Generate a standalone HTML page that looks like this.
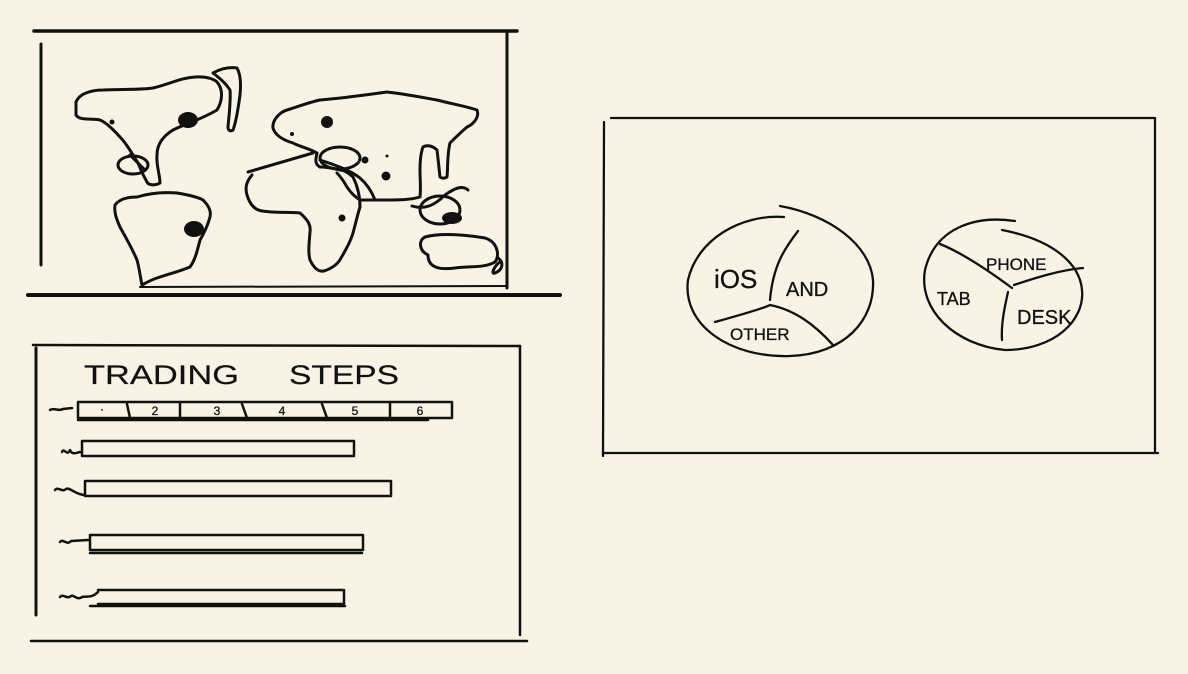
<!DOCTYPE html>
<html><head><meta charset="utf-8"><style>
html,body{margin:0;padding:0;background:#f8f3e5;}
svg{display:block}
text{font-family:"Liberation Sans",sans-serif;fill:#111;stroke:#111;stroke-width:0.3}
</style></head><body>
<svg width="1188" height="674" viewBox="0 0 1188 674" xmlns="http://www.w3.org/2000/svg">
<g fill="none" stroke="#111" stroke-width="3" stroke-linecap="round" stroke-linejoin="round">
<path d="M34 31 L517 31" stroke-width="3.5"/>
<path d="M41 44 L41 265"/>
<path d="M507 32 L507 288"/>
<path d="M140 287 L507 286" stroke-width="2"/>
<path d="M28 295 L560 295" stroke-width="4"/>
<path d="M76 102 C80 92 95 90 103 90 C120 89 140 90 153 88 C170 84 180 78 195 77 C208 76 215 80 217 82 C224 90 222 102 217 110 C200 120 185 124 173 130 C160 138 157 147 157 155 C156 165 160 175 160 183 C155 186 148 185 147 182 C143 175 140 168 138 163 C130 150 125 142 120 137 C112 128 105 122 100 120 C90 118 80 121 76 115 Z"/>
<path d="M213 73 C222 68 230 67 237 68 C241 75 241 85 240 95 C238 110 236 122 233 130 C230 132 228 130 228 127 C229 115 231 100 230 90 C225 82 218 77 213 73"/>
<ellipse cx="133" cy="165" rx="15" ry="9"/>
<path d="M130 155 L145 170"/>
<path d="M115 205 C120 198 130 197 137 197 C150 193 165 192 177 193 C190 195 200 198 203 200 C210 207 211 212 210 217 C207 228 203 235 200 240 C197 252 195 260 190 267 C178 272 168 274 160 277 C150 280 146 283 142 285 C140 275 139 267 137 260 C132 248 126 238 120 227 C116 218 114 212 115 205 Z"/>
<path d="M248 172 L313 153"/>
<path d="M252 175 C246 182 245 188 247 195 C250 205 255 210 262 211 C275 213 290 212 300 213 C308 220 311 225 310 232 C309 245 308 252 310 260 C314 268 318 272 324 271 C333 268 338 264 341 258 C347 248 351 240 353 233 C356 222 358 213 360 207 C360 195 357 185 353 177 C348 172 343 170 340 170 C332 168 325 167 320 167"/>
<path d="M320 167 C314 164 316 158 317 153 C308 148 298 146 293 143 C283 140 275 135 273 128 C272 120 280 112 287 110 C300 106 310 102 320 100 C345 98 365 95 387 92 C405 94 420 97 437 100 C452 104 465 106 477 110 C480 118 472 125 467 127 C460 133 455 138 450 143 C447 155 448 168 447 177 C444 179 441 178 440 177 C439 168 438 158 437 150 C432 145 426 145 423 147 C420 155 420 165 420 170 C420 180 421 188 420 197 C410 200 398 200 387 200 C375 200 365 200 360 200 C352 195 349 190 347 187 C343 180 340 176 337 173"/>
<ellipse cx="340" cy="158" rx="20" ry="11"/>
<path d="M320 160 C335 165 350 170 360 178 C368 185 372 192 375 200"/>
<ellipse cx="440" cy="210" rx="20" ry="14"/>
<path d="M412 206 C425 210 435 205 445 195 C455 188 462 185 468 190"/>
<path d="M428 255 C418 250 419 240 425 237 C440 233 460 234 485 238 C498 242 500 256 495 262 C485 268 470 266 455 268 C440 270 428 268 428 255 Z"/>
<path d="M498 258 C504 262 503 270 495 273 C490 275 495 265 500 262"/>
</g>
<g fill="#111" stroke="none">
<ellipse cx="188" cy="120" rx="10" ry="8"/>
<circle cx="112" cy="122" r="2.5"/>
<ellipse cx="194" cy="229" rx="10" ry="8"/>
<circle cx="327" cy="122" r="6"/>
<circle cx="292" cy="134" r="2"/>
<circle cx="387" cy="156" r="1.5"/>
<circle cx="386" cy="176" r="4.5"/>
<circle cx="342" cy="218" r="3.5"/>
<circle cx="365" cy="160" r="3.5"/>
<ellipse cx="452" cy="218" rx="10" ry="6"/>
</g>
<g fill="none" stroke="#111" stroke-width="2.5" stroke-linecap="round" stroke-linejoin="round">
<path d="M33 345 L520 346"/>
<path d="M36 348 L36 615" stroke-width="3"/>
<path d="M520 346 L520 635"/>
<path d="M31 641 L527 641"/>
<path d="M78 402 L452 402 L452 418 L78 418 Z"/>
<path d="M78 420 L428 420"/>
<path d="M127 404 L130 418 M180 404 L180 418 M242 404 L247 418 M322 404 L327 418 M390 404 L390 418"/>
<path d="M50 410 C55 407 58 412 63 409 L72 408"/>
<path d="M82 441 L354 441 L354 456 L82 456 Z"/>
<path d="M62 452 C64 447 67 457 70 450 C72 455 76 453 80 452"/>
<path d="M85 481 L391 481 L391 496 L85 496 Z"/>
<path d="M55 490 C58 486 62 493 66 489 C70 487 74 494 84 495"/>
<path d="M90 535 L363 535 L363 550 L90 550 Z"/>
<path d="M90 553 L362 553"/>
<path d="M60 542 C63 538 67 546 71 541 L88 540"/>
<path d="M98 590 L344 590 L344 604 L98 604"/>
<path d="M90 606 L345 606"/>
<path d="M60 597 C63 593 67 600 71 596 C74 594 77 601 82 597 C88 596 92 598 98 592"/>
</g>
<text x="84" y="384" font-size="27" textLength="155" lengthAdjust="spacingAndGlyphs" style="stroke-width:0.2">TRADING</text>
<text x="289" y="384" font-size="27" textLength="110" lengthAdjust="spacingAndGlyphs" style="stroke-width:0.2">STEPS</text>
<g font-size="12" text-anchor="middle">
<text x="155" y="415">2</text><text x="217" y="415">3</text><text x="282" y="415">4</text><text x="355" y="415">5</text><text x="420" y="415">6</text><text x="102" y="413">·</text>
</g>
<g fill="none" stroke="#111" stroke-width="2.3" stroke-linecap="round">
<path d="M611 118 L1155 118"/>
<path d="M604 122 L603 456"/>
<path d="M1155 118 L1155 452"/>
<path d="M603 453 L1158 453"/>
<path d="M784 217 C740 214 697 240 688 280 C682 325 730 358 790 356 C845 354 875 320 873 280 C870 245 830 215 780 206"/>
<path d="M798 231 C785 248 773 265 770 300"/>
<path d="M715 322 C740 315 765 308 770 305 C795 310 815 325 833 345"/>
<path d="M1015 221 C975 215 935 228 925 270 C918 310 955 345 1005 350 C1055 350 1085 320 1082 290 C1080 265 1055 240 1002 230"/>
<path d="M940 244 C960 252 985 268 1012 288"/>
<path d="M1014 285 C1035 278 1060 270 1083 268"/>
<path d="M1008 292 C1004 310 1001 325 1002 340"/>
</g>
<g>
<text x="714" y="288" font-size="26">iOS</text>
<text x="786" y="296" font-size="20">AND</text>
<text x="730" y="340" font-size="17">OTHER</text>
<text x="937" y="305" font-size="18">TAB</text>
<text x="986" y="270" font-size="17">PHONE</text>
<text x="1017" y="324" font-size="20">DESK</text>
</g>
</svg>
</body></html>
